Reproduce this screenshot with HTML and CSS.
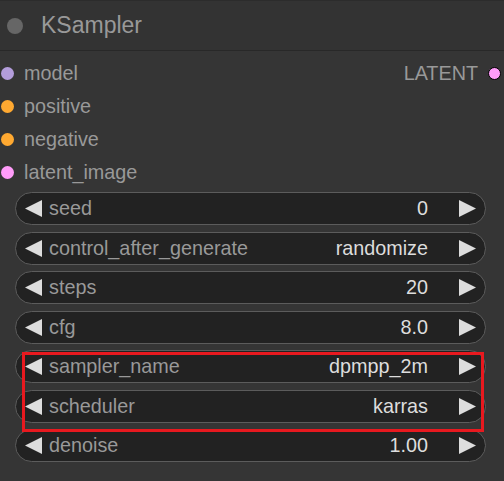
FILE: index.html
```html
<!DOCTYPE html>
<html>
<head>
<meta charset="utf-8">
<link rel="stylesheet" href="styles.css">
</head>
<body>
<div class="node">
  <div class="title"><span class="title-dot"></span><span class="title-text">KSampler</span></div>
  <div class="slots">
    <div class="slot-row">
      <div class="slot-in"><span class="dot dot-model"></span>model</div>
      <div class="slot-out">LATENT<span class="dot dot-latent out-dot"></span></div>
    </div>
    <div class="slot-row"><div class="slot-in"><span class="dot dot-cond"></span>positive</div></div>
    <div class="slot-row"><div class="slot-in"><span class="dot dot-cond"></span>negative</div></div>
    <div class="slot-row"><div class="slot-in"><span class="dot dot-latent"></span>latent_image</div></div>
  </div>
  <div class="widgets">
    <div class="widget"><svg class="arrow" viewBox="0 0 17 17"><polygon points="17,0 17,17 0,8.5"/></svg><span class="label">seed</span><span class="value">0</span><svg class="arrow" viewBox="0 0 17 17"><polygon points="0,0 0,17 17,8.5"/></svg></div>
    <div class="widget"><svg class="arrow" viewBox="0 0 17 17"><polygon points="17,0 17,17 0,8.5"/></svg><span class="label">control_after_generate</span><span class="value">randomize</span><svg class="arrow" viewBox="0 0 17 17"><polygon points="0,0 0,17 17,8.5"/></svg></div>
    <div class="widget"><svg class="arrow" viewBox="0 0 17 17"><polygon points="17,0 17,17 0,8.5"/></svg><span class="label">steps</span><span class="value">20</span><svg class="arrow" viewBox="0 0 17 17"><polygon points="0,0 0,17 17,8.5"/></svg></div>
    <div class="widget"><svg class="arrow" viewBox="0 0 17 17"><polygon points="17,0 17,17 0,8.5"/></svg><span class="label">cfg</span><span class="value">8.0</span><svg class="arrow" viewBox="0 0 17 17"><polygon points="0,0 0,17 17,8.5"/></svg></div>
    <div class="widget"><svg class="arrow" viewBox="0 0 17 17"><polygon points="17,0 17,17 0,8.5"/></svg><span class="label">sampler_name</span><span class="value">dpmpp_2m</span><svg class="arrow" viewBox="0 0 17 17"><polygon points="0,0 0,17 17,8.5"/></svg></div>
    <div class="widget"><svg class="arrow" viewBox="0 0 17 17"><polygon points="17,0 17,17 0,8.5"/></svg><span class="label">scheduler</span><span class="value">karras</span><svg class="arrow" viewBox="0 0 17 17"><polygon points="0,0 0,17 17,8.5"/></svg></div>
    <div class="widget"><svg class="arrow" viewBox="0 0 17 17"><polygon points="17,0 17,17 0,8.5"/></svg><span class="label">denoise</span><span class="value">1.00</span><svg class="arrow" viewBox="0 0 17 17"><polygon points="0,0 0,17 17,8.5"/></svg></div>
  </div>
  <div class="highlight"></div>
</div>
</body>
</html>
```

FILE: styles.css
```css
html, body {
  margin: 0;
  padding: 0;
  background: #353535;
}
body {
  width: 504px;
  height: 481px;
  overflow: hidden;
  font-family: "Liberation Sans", Arial, sans-serif;
}
.node {
  position: relative;
  width: 504px;
  height: 481px;
  background: #353535;
}
.title {
  box-sizing: border-box;
  border-top: 1px solid #2c2c2c;
  border-bottom: 1px solid #282828;
  background: #333333;
  display: flex;
  align-items: center;
  padding-left: 7px;
  height: 51px;
}
.title-dot {
  width: 16px;
  height: 16px;
  border-radius: 50%;
  background: #666666;
  flex: none;
}
.title-text {
  margin-left: 18px;
  font-size: 23px;
  color: #999999;
}
.slots {
  padding-top: 5.5px;
  display: flex;
  flex-direction: column;
}
.slot-row {
  height: 33px;
  display: flex;
  align-items: center;
  justify-content: space-between;
  font-size: 19.8px;
  color: #999999;
}
.slot-in {
  display: flex;
  align-items: center;
  padding-left: 1px;
}
.slot-out {
  display: flex;
  align-items: center;
  padding-right: 3px;
}
.dot {
  width: 13px;
  height: 13px;
  border-radius: 50%;
  flex: none;
  margin-right: 10px;
}
.out-dot {
  margin-right: 0;
  margin-left: 10px;
  box-sizing: border-box;
  width: 13px;
  height: 13px;
  border: 1.5px solid #000;
}
.dot-model { background: #b39ddb; }
.dot-cond { background: #ffa931; }
.dot-latent { background: #ff9cf9; }
.widgets {
  margin-top: 3.5px;
  display: flex;
  flex-direction: column;
  gap: 6.5px;
  padding-left: 15px;
}
.widget {
  width: 471px;
  height: 33px;
  box-sizing: border-box;
  border: 1px solid #5c5c5c;
  border-radius: 17px;
  background: #222222;
  display: flex;
  align-items: center;
  padding-left: 9px;
  padding-right: 9px;
  font-size: 19.8px;
}
.arrow {
  width: 17px;
  height: 17px;
  fill: #dddddd;
  flex: none;
}
.label {
  color: #999999;
  margin-left: 7px;
  flex: 1;
}
.value {
  color: #dddddd;
  margin-right: 31px;
}
.highlight {
  position: absolute;
  left: 22px;
  top: 352px;
  width: 462px;
  height: 80px;
  box-sizing: border-box;
  border: 3px solid #e8191f;
}
```
